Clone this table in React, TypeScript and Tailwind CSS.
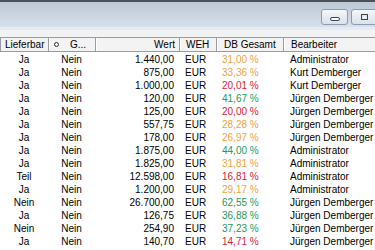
const rows = [
  ['Ja', 'Nein', '1.440,00', 'EUR', '31,00 %', 'o', 'Administrator'],
  ['Ja', 'Nein', '875,00', 'EUR', '33,36 %', 'o', 'Kurt Demberger'],
  ['Ja', 'Nein', '1.000,00', 'EUR', '20,01 %', 'r', 'Kurt Demberger'],
  ['Ja', 'Nein', '120,00', 'EUR', '41,67 %', 'g', 'Jürgen Demberger'],
  ['Ja', 'Nein', '125,00', 'EUR', '20,00 %', 'r', 'Jürgen Demberger'],
  ['Ja', 'Nein', '557,75', 'EUR', '28,28 %', 'o', 'Jürgen Demberger'],
  ['Ja', 'Nein', '178,00', 'EUR', '26,97 %', 'o', 'Jürgen Demberger'],
  ['Ja', 'Nein', '1.875,00', 'EUR', '44,00 %', 'g', 'Administrator'],
  ['Ja', 'Nein', '1.825,00', 'EUR', '31,81 %', 'o', 'Administrator'],
  ['Teil', 'Nein', '12.598,00', 'EUR', '16,81 %', 'r', 'Administrator'],
  ['Ja', 'Nein', '1.200,00', 'EUR', '29,17 %', 'o', 'Administrator'],
  ['Nein', 'Nein', '26.700,00', 'EUR', '62,55 %', 'g', 'Jürgen Demberger'],
  ['Ja', 'Nein', '126,75', 'EUR', '36,88 %', 'g', 'Jürgen Demberger'],
  ['Nein', 'Nein', '254,90', 'EUR', '37,23 %', 'g', 'Jürgen Demberger'],
  ['Ja', 'Nein', '140,70', 'EUR', '14,71 %', 'r', 'Jürgen Demberger'],
]

const tone: Record<string, string> = {
  o: 'text-[#eea437]',
  r: 'text-[#d41f35]',
  g: 'text-[#25985a]',
}

function WinButton({ children }: { children: React.ReactNode }) {
  return (
    <div className="flex h-[16px] w-[27px] shrink-0 items-center justify-center rounded-[3px] border border-[#8d9bb0] bg-gradient-to-b from-[#f4f7fa] to-[#d9e1ea]">
      {children}
    </div>
  )
}

export default function App() {
  return (
    <div className="h-[250px] w-[375px] overflow-hidden bg-white font-['Liberation_Sans',Arial,sans-serif] text-[10px] text-black">
      <div className="h-[2px] bg-[#4b505a]" />
      <div className="flex h-[25px] justify-end gap-[3px] bg-gradient-to-b from-[#bdc8d5] to-[#d7e1ec] pt-[7px] pr-0">
        <WinButton>
          <div className="mt-[3px] h-[4px] w-[10px] rounded-[2px] border border-[#3c4450] bg-white" />
        </WinButton>
        <div className="-mr-[3px]">
          <WinButton>
            <div className="flex h-[6px] w-[7px] items-center justify-center border border-[#3c4450] bg-[#dfe5ec]">
              <div className="h-[1px] w-[3px] bg-white" />
            </div>
          </WinButton>
        </div>
      </div>
      <div className="h-[3px] bg-[#e5ebf1]" />
      <div className="h-[7px] bg-[#f1f2f4]" />

      <div className="flex h-[15px] items-stretch border-y border-l border-[#9b9b9b] bg-[#f3f3f3] leading-[13px] whitespace-nowrap">
        <div className="w-[48px] shrink-0 border-r border-[#9b9b9b] pl-[4px]">Lieferbar</div>
        <div className="flex w-[47px] shrink-0 items-center border-r border-l border-r-[#9b9b9b] border-l-white pl-[4px]">
          <span className="h-[5px] w-[5px] rounded-full border border-[#333]" />
          <span className="ml-[11px]">G...</span>
        </div>
        <div className="w-[84px] shrink-0 border-r border-l border-r-[#9b9b9b] border-l-white pr-[4px] text-right">Wert</div>
        <div className="w-[37px] shrink-0 border-r border-l border-r-[#9b9b9b] border-l-white pl-[5px]">WEH</div>
        <div className="w-[67px] shrink-0 border-r border-l border-r-[#9b9b9b] border-l-white pl-[6px]">DB Gesamt</div>
        <div className="flex-1 border-l border-white pl-[6px]">Bearbeiter</div>
      </div>

      <div className="pt-[1px]">
        {rows.map((r, i) => (
          <div key={i} className="flex h-[13px] leading-[13px] whitespace-nowrap">
            <div className="w-[48px] shrink-0 text-center">{r[0]}</div>
            <div className="w-[47px] shrink-0 text-center">{r[1]}</div>
            <div className="w-[84px] shrink-0 pr-[5px] text-right">{r[2]}</div>
            <div className="w-[37px] shrink-0 pl-[6px]">{r[3]}</div>
            <div className={`w-[67px] shrink-0 pl-[6px] ${tone[r[5]]}`}>{r[4]}</div>
            <div className="flex-1 pl-[7px]">{r[6]}</div>
          </div>
        ))}
      </div>
    </div>
  )
}
